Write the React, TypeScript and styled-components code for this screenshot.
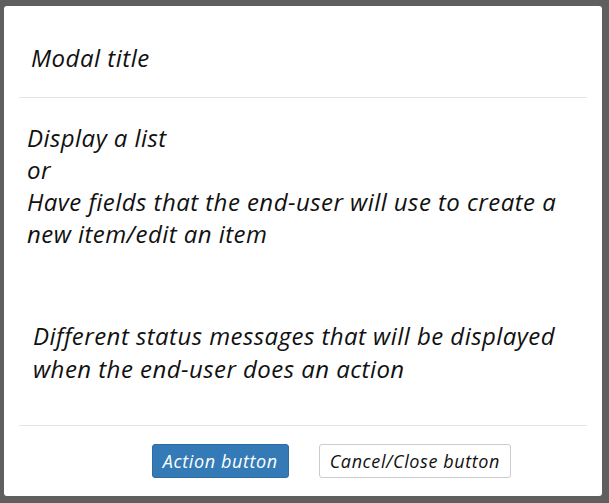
import React from 'react';
import styled, { createGlobalStyle } from 'styled-components';

const GlobalStyle = createGlobalStyle`
  html, body {
    margin: 0;
    padding: 0;
    background-color: #5f5f5f;
  }
  body {
    font-family: "Open Sans", "Liberation Sans", sans-serif;
  }
`;

const Frame = styled.div`
  width: 609px;
  height: 503px;
  padding: 6px 7px 7px 4px;
  box-sizing: border-box;
  background-color: #5f5f5f;
`;

const ModalBox = styled.div`
  background-color: #ffffff;
  border-radius: 3px;
  padding: 0 15px;
  height: 490px;
  box-sizing: border-box;
  display: flex;
  flex-direction: column;
  color: #111;
  font-style: italic;
`;

const Header = styled.div`
  padding: 36px 0 23px 12px;
  border-bottom: 1px solid #e5e5e5;
`;

const Title = styled.h4`
  margin: 0;
  font-size: 24px;
  line-height: 32px;
  letter-spacing: 0.5px;
  font-weight: 400;
`;

const Body = styled.div`
  flex: 1;
  padding: 24px 0 0 8px;
`;

const ContentText = styled.p`
  margin: 0;
  font-size: 24px;
  line-height: 32px;
  letter-spacing: 0.45px;
`;

const StatusText = styled.p`
  margin: 69px 0 0 6px;
  font-size: 24px;
  line-height: 33px;
  letter-spacing: 0.45px;
`;

const Footer = styled.div`
  border-top: 1px solid #e5e5e5;
  padding: 18px 76px 18px 0;
  display: flex;
  justify-content: flex-end;
  gap: 30px;
`;

const Button = styled.button<{ $primary?: boolean }>`
  font-family: "Open Sans", "Liberation Sans", sans-serif;
  font-style: italic;
  font-size: 18px;
  letter-spacing: 0.6px;
  line-height: 22px;
  height: 34px;
  padding: 0 10px;
  border-radius: 3px;
  border: 1px solid ${p => (p.$primary ? '#2e6da4' : '#cccccc')};
  background-color: ${p => (p.$primary ? '#337ab7' : '#ffffff')};
  color: ${p => (p.$primary ? '#ffffff' : '#111')};
  cursor: pointer;
`;

export default function App() {
  return (
    <>
      <GlobalStyle />
      <Frame>
        <ModalBox>
          <Header>
            <Title>Modal title</Title>
          </Header>
          <Body>
            <ContentText>
              Display a list
              <br />
              or
              <br />
              Have fields that the end-user will use to create a new item/edit an item
            </ContentText>
            <StatusText>
              Different status messages that will be displayed when the end-user does an action
            </StatusText>
          </Body>
          <Footer>
            <Button $primary>Action button</Button>
            <Button>Cancel/Close button</Button>
          </Footer>
        </ModalBox>
      </Frame>
    </>
  );
}
